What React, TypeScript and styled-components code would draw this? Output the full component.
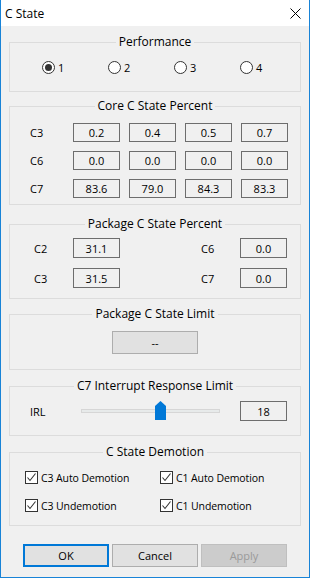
import React from 'react';
import styled, { createGlobalStyle } from 'styled-components';

const GlobalStyle = createGlobalStyle`
  html, body {
    margin: 0;
    padding: 0;
    background: #f0f0f0;
  }
  body {
    font-family: 'Open Sans', 'Liberation Sans', sans-serif;
    color: #000;
  }
`;

const Window = styled.div`
  width: 310px;
  height: 578px;
  box-sizing: border-box;
  border: 1px solid #1883d7;
  border-top: none;
  background: #f0f0f0;
  display: flex;
  flex-direction: column;
`;

const TitleBar = styled.div`
  height: 26px;
  flex: none;
  background: #fff;
  display: flex;
  align-items: center;
  justify-content: space-between;
  padding: 0 8px 0 4px;
  font-size: 12px;
`;

const Body = styled.div`
  padding: 0 8px;
  display: flex;
  flex-direction: column;
`;

const Group = styled.section<{ $h: number; $mt: number }>`
  height: ${p => p.$h}px;
  margin-top: ${p => p.$mt}px;
  box-sizing: border-box;
  border: 1px solid #dcdcdc;
  display: flex;
  flex-direction: column;
`;

const GroupTitle = styled.div`
  align-self: center;
  margin-top: -9px;
  padding: 0 3px;
  background: #f0f0f0;
  font-size: 12px;
  line-height: 16px;
`;

const RadioRow = styled.div`
  display: grid;
  grid-template-columns: repeat(4, 66px);
  padding-left: 32px;
  margin-top: 10px;
`;

const RadioItem = styled.label`
  display: flex;
  align-items: center;
  gap: 3px;
  font-size: 11px;
  height: 14px;
`;

const RadioDot = styled.span<{ $on?: boolean }>`
  width: 13px;
  height: 13px;
  box-sizing: border-box;
  border: 1px solid #333;
  border-radius: 50%;
  background: #fff;
  display: flex;
  align-items: center;
  justify-content: center;
  &::after {
    content: '';
    width: 7px;
    height: 7px;
    border-radius: 50%;
    background: ${p => (p.$on ? '#333' : 'transparent')};
  }
`;

const CoreGrid = styled.div`
  display: grid;
  grid-template-columns: 34px repeat(4, 47px);
  column-gap: 9px;
  row-gap: 9px;
  padding-left: 20px;
  margin-top: 9px;
`;

const Label = styled.span`
  font-size: 11px;
  display: flex;
  align-items: center;
`;

const ValueBox = styled.div<{ $h?: number }>`
  height: ${p => p.$h ?? 19}px;
  box-sizing: border-box;
  border: 1px solid #6d6d6d;
  background: #f0f0f0;
  display: flex;
  align-items: center;
  justify-content: center;
  font-size: 11px;
`;

const PackageGrid = styled.div`
  display: grid;
  grid-template-columns: 39px 47px 81px 39px 47px;
  row-gap: 10px;
  padding-left: 24px;
  margin-top: 6px;
`;

const LimitButton = styled.div`
  align-self: center;
  margin-top: 9px;
  width: 86px;
  height: 23px;
  box-sizing: border-box;
  border: 1px solid #adadad;
  background: #e1e1e1;
  display: flex;
  align-items: center;
  justify-content: center;
  font-size: 11px;
`;

const SliderRow = styled.div`
  display: flex;
  align-items: center;
  padding-left: 20px;
  margin-top: 7px;
`;

const SliderLabel = styled.span`
  width: 51px;
  font-size: 11px;
`;

const Track = styled.div`
  position: relative;
  width: 139px;
  height: 4px;
  box-sizing: border-box;
  border: 1px solid #d6d6d6;
  background: #e7eaea;
  margin-right: 20px;
`;

const Thumb = styled.svg`
  position: absolute;
  top: -9px;
`;

const CheckGrid = styled.div`
  display: grid;
  grid-template-columns: 135px 1fr;
  row-gap: 15px;
  padding-left: 15px;
  margin-top: 11px;
`;

const CheckItem = styled.label`
  display: flex;
  align-items: center;
  gap: 3px;
  font-size: 10.5px;
  letter-spacing: -0.1px;
  height: 13px;
  white-space: nowrap;
`;

const CheckBox = styled.span`
  width: 13px;
  height: 13px;
  box-sizing: border-box;
  border: 1px solid #333;
  background: #fff;
  display: flex;
  align-items: center;
  justify-content: center;
`;

const ButtonRow = styled.div`
  display: flex;
  justify-content: center;
  gap: 3px;
  margin-top: 18px;
`;

const DialogButton = styled.button<{ $variant?: 'default' | 'disabled' }>`
  width: 86px;
  height: 23px;
  box-sizing: border-box;
  font-family: inherit;
  font-size: 11px;
  padding: 0;
  background: ${p => (p.$variant === 'disabled' ? '#cccccc' : '#e1e1e1')};
  color: ${p => (p.$variant === 'disabled' ? '#9a9a9a' : '#000')};
  border: ${p =>
    p.$variant === 'default' ? '2px solid #0078d7' : p.$variant === 'disabled' ? '1px solid #bfbfbf' : '1px solid #adadad'};
`;

const core = [
  ['C3', '0.2', '0.4', '0.5', '0.7'],
  ['C6', '0.0', '0.0', '0.0', '0.0'],
  ['C7', '83.6', '79.0', '84.3', '83.3'],
];

const pkg = [
  ['C2', '31.1', 'C6', '0.0'],
  ['C3', '31.5', 'C7', '0.0'],
];

const demotion = ['C3 Auto Demotion', 'C1 Auto Demotion', 'C3 Undemotion', 'C1 Undemotion'];

const irl = 18;
const irlMax = 31;

const Check = () => (
  <svg width="11" height="11" viewBox="0 0 11 11">
    <path d="M1.5 5.5 L4 8.5 L9.5 1.5" fill="none" stroke="#333" strokeWidth="1.1" />
  </svg>
);

export default function App() {
  return (
    <>
      <GlobalStyle />
      <Window>
        <TitleBar>
          <span>C State</span>
          <svg width="11" height="11" viewBox="0 0 11 11">
            <path d="M0.5 0.5 L10.5 10.5 M10.5 0.5 L0.5 10.5" stroke="#000" strokeWidth="1" />
          </svg>
        </TitleBar>
        <Body>
          <Group $h={50} $mt={16}>
            <GroupTitle>Performance</GroupTitle>
            <RadioRow>
              {['1', '2', '3', '4'].map((n, i) => (
                <RadioItem key={n}>
                  <RadioDot $on={i === 0} />
                  {n}
                </RadioItem>
              ))}
            </RadioRow>
          </Group>

          <Group $h={99} $mt={14}>
            <GroupTitle>Core C State Percent</GroupTitle>
            <CoreGrid>
              {core.map(row => (
                <React.Fragment key={row[0]}>
                  <Label>{row[0]}</Label>
                  {row.slice(1).map((v, i) => (
                    <ValueBox key={i}>{v}</ValueBox>
                  ))}
                </React.Fragment>
              ))}
            </CoreGrid>
          </Group>

          <Group $h={75} $mt={19}>
            <GroupTitle>Package C State Percent</GroupTitle>
            <PackageGrid>
              {pkg.map(row => (
                <React.Fragment key={row[0]}>
                  <Label>{row[0]}</Label>
                  <ValueBox $h={20}>{row[1]}</ValueBox>
                  <span />
                  <Label>{row[2]}</Label>
                  <ValueBox $h={20}>{row[3]}</ValueBox>
                </React.Fragment>
              ))}
            </PackageGrid>
          </Group>

          <Group $h={56} $mt={15}>
            <GroupTitle>Package C State Limit</GroupTitle>
            <LimitButton>--</LimitButton>
          </Group>

          <Group $h={50} $mt={16}>
            <GroupTitle>C7 Interrupt Response Limit</GroupTitle>
            <SliderRow>
              <SliderLabel>IRL</SliderLabel>
              <Track>
                <Thumb width="11" height="19" viewBox="0 0 11 19" style={{ left: Math.round((irl / irlMax) * 128) - 1 }}>
                  <path d="M0 5 L5.5 0 L11 5 L11 19 L0 19 Z" fill="#0078d7" />
                </Thumb>
              </Track>
              <ValueBox $h={20} style={{ width: 47 }}>{irl}</ValueBox>
            </SliderRow>
          </Group>

          <Group $h={74} $mt={16}>
            <GroupTitle>C State Demotion</GroupTitle>
            <CheckGrid>
              {demotion.map(d => (
                <CheckItem key={d}>
                  <CheckBox>
                    <Check />
                  </CheckBox>
                  {d}
                </CheckItem>
              ))}
            </CheckGrid>
          </Group>

          <ButtonRow>
            <DialogButton $variant="default">OK</DialogButton>
            <DialogButton>Cancel</DialogButton>
            <DialogButton $variant="disabled">Apply</DialogButton>
          </ButtonRow>
        </Body>
      </Window>
    </>
  );
}
